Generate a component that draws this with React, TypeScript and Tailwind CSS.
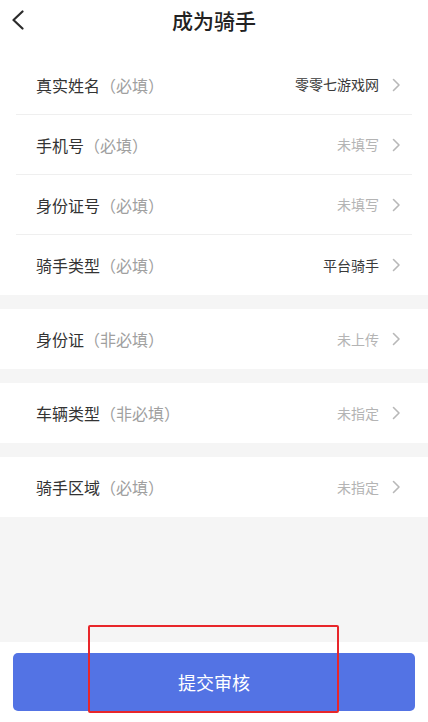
import React from 'react'

interface RowItem {
  label: string
  hint: string
  value: string
  filled?: boolean
}

const groups: RowItem[][] = [
  [
    { label: '真实姓名', hint: '（必填）', value: '零零七游戏网', filled: true },
    { label: '手机号', hint: '（必填）', value: '未填写' },
    { label: '身份证号', hint: '（必填）', value: '未填写' },
    { label: '骑手类型', hint: '（必填）', value: '平台骑手', filled: true },
  ],
  [{ label: '身份证', hint: '（非必填）', value: '未上传' }],
  [{ label: '车辆类型', hint: '（非必填）', value: '未指定' }],
  [{ label: '骑手区域', hint: '（必填）', value: '未指定' }],
]

function Chevron() {
  return (
    <svg width="9" height="14" viewBox="0 0 9 14" fill="none" className="shrink-0">
      <path d="M1.5 1.5L7 7L1.5 12.5" stroke="#b8b8b8" strokeWidth="1.6" strokeLinecap="round" strokeLinejoin="round" />
    </svg>
  )
}

function Row({ item, last }: { item: RowItem; last: boolean }) {
  return (
    <div
      className={`mx-[16px] h-[60px] flex items-center pl-[20px] pr-[11px] ${last ? '' : 'border-b border-[#efefef]'}`}
    >
      <div className="flex-1 text-[16px] text-[#333333]">
        {item.label}
        <span className="text-[#a0a0a0]">{item.hint}</span>
      </div>
      <span className={`text-[14px] mr-[13px] ${item.filled ? 'text-[#3a3a3a]' : 'text-[#b4b4b4]'}`}>
        {item.value}
      </span>
      <Chevron />
    </div>
  )
}

export default function App() {
  return (
    <div
      className="w-[428px] h-[722px] bg-[#f5f5f5] flex flex-col relative overflow-hidden"
      style={{ fontFamily: '"Noto Sans CJK SC", "Noto Sans", sans-serif' }}
    >
      {/* Header */}
      <div className="h-[55px] bg-white relative flex justify-center pt-[5px]">
        <svg width="14" height="20" viewBox="0 0 14 20" fill="none" className="absolute left-[11px] top-[10px]">
          <path d="M11.5 1.5L2.5 10L11.5 18.5" stroke="#2b2b2b" strokeWidth="2.2" strokeLinecap="round" strokeLinejoin="round" />
        </svg>
        <h1 className="text-[21px] leading-[30px] font-medium text-[#222222]">成为骑手</h1>
      </div>

      {/* Form groups */}
      {groups.map((group, gi) => (
        <div key={gi} className={`bg-white ${gi > 0 ? 'mt-[14px]' : ''}`}>
          {group.map((item, i) => (
            <Row key={item.label} item={item} last={i === group.length - 1} />
          ))}
        </div>
      ))}

      <div className="flex-1" />

      {/* Footer */}
      <div className="h-[80px] bg-white pt-[11px] px-[13px]">
        <button className="w-full h-[58px] rounded-[5px] bg-[#5373e4] text-white text-[18px]">
          提交审核
        </button>
      </div>

      {/* Annotation box */}
      <div className="absolute left-[88px] top-[625px] w-[251px] h-[88px] border-2 border-[#e8262a] rounded-[2px]" />
    </div>
  )
}
